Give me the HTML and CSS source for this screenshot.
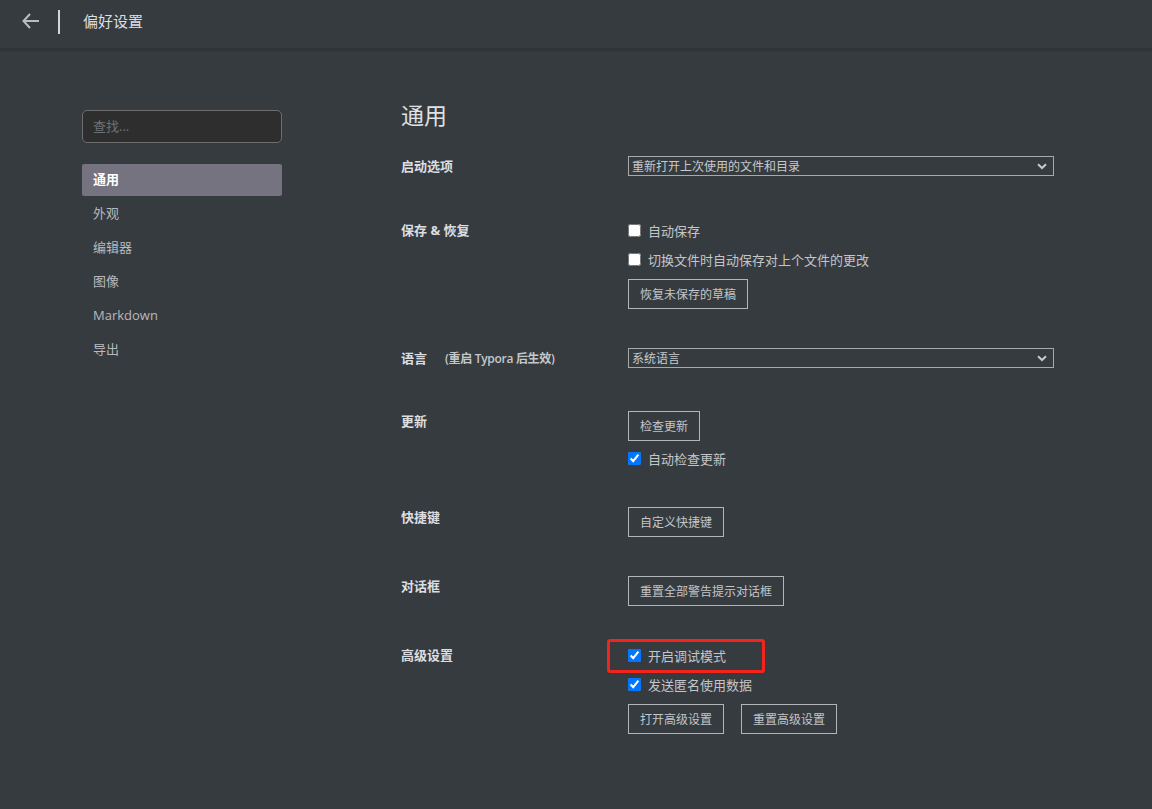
FILE: index.html
```html
<!DOCTYPE html>
<html lang="zh-CN">
<head>
<meta charset="utf-8">
<title>偏好设置</title>
<link rel="stylesheet" href="styles.css">
</head>
<body>
<header class="topbar">
  <span class="back">
    <svg width="18" height="16" viewBox="0 0 18 16"><path d="M8 1 L1.5 8 L8 15 M1.5 8 H17" fill="none" stroke="#b9bcc0" stroke-width="2"/></svg>
  </span>
  <span class="divider"></span>
  <span class="title">偏好设置</span>
</header>
<div class="main">
  <aside class="sidebar">
    <div class="search">查找...</div>
    <nav class="nav">
      <div class="nav-item active">通用</div>
      <div class="nav-item">外观</div>
      <div class="nav-item">编辑器</div>
      <div class="nav-item">图像</div>
      <div class="nav-item">Markdown</div>
      <div class="nav-item">导出</div>
    </nav>
  </aside>
  <section class="content">
    <h1 class="heading">通用</h1>

    <div class="row">
      <div class="label">启动选项</div>
      <div class="ctrl">
        <div class="select"><span>重新打开上次使用的文件和目录</span>
          <svg class="chev" width="10" height="7" viewBox="0 0 10 7"><path d="M1 1.2 L5 5 L9 1.2" fill="none" stroke="#c8cacd" stroke-width="2"/></svg>
        </div>
      </div>
    </div>

    <div class="row">
      <div class="label">保存 &amp; 恢复</div>
      <div class="ctrl">
        <label class="check"><input type="checkbox"><span>自动保存</span></label>
        <label class="check"><input type="checkbox"><span>切换文件时自动保存对上个文件的更改</span></label>
        <div class="btns"><button class="btn">恢复未保存的草稿</button></div>
      </div>
    </div>

    <div class="row">
      <div class="label">语言<span class="note">(重启 Typora 后生效)</span></div>
      <div class="ctrl">
        <div class="select"><span>系统语言</span>
          <svg class="chev" width="10" height="7" viewBox="0 0 10 7"><path d="M1 1.2 L5 5 L9 1.2" fill="none" stroke="#c8cacd" stroke-width="2"/></svg>
        </div>
      </div>
    </div>

    <div class="row">
      <div class="label">更新</div>
      <div class="ctrl">
        <div class="btns first"><button class="btn">检查更新</button></div>
        <label class="check"><input type="checkbox" checked><span>自动检查更新</span></label>
      </div>
    </div>

    <div class="row">
      <div class="label">快捷键</div>
      <div class="ctrl">
        <div class="btns first"><button class="btn">自定义快捷键</button></div>
      </div>
    </div>

    <div class="row">
      <div class="label">对话框</div>
      <div class="ctrl">
        <div class="btns first"><button class="btn">重置全部警告提示对话框</button></div>
      </div>
    </div>

    <div class="row">
      <div class="label">高级设置</div>
      <div class="ctrl">
        <div class="highlight-wrap">
          <label class="check"><input type="checkbox" checked><span>开启调试模式</span></label>
          <span class="redbox"></span>
        </div>
        <label class="check"><input type="checkbox" checked><span>发送匿名使用数据</span></label>
        <div class="btns"><button class="btn">打开高级设置</button><button class="btn">重置高级设置</button></div>
      </div>
    </div>
  </section>
</div>
</body>
</html>
```

FILE: styles.css
```css
* { box-sizing: border-box; }
html, body { margin: 0; padding: 0; }
body {
  width: 1152px;
  height: 809px;
  overflow: hidden;
  background: #363b40;
  color: #b8bfc6;
  font-family: "Open Sans", "Noto Sans CJK SC", sans-serif;
  font-size: 13px;
}
.topbar {
  height: 50px;
  display: flex;
  align-items: center;
  background: #363b40;
  border-bottom: 2px solid #303337;
  box-shadow: 0 1px 2px rgba(0,0,0,0.15);
}
.back {
  width: 58px;
  display: flex;
  padding-left: 22px;
  align-items: center;
  height: 24px;
  margin-top: -6px;
}
.divider {
  width: 2px;
  height: 24px;
  background: #d4d6d8;
  margin-top: -5px;
}
.title {
  margin-left: 23px;
  margin-top: -7px;
  font-size: 15px;
  color: #dcdee0;
}
.main {
  display: flex;
}
.sidebar {
  width: 200px;
  margin-left: 82px;
  padding-top: 60px;
}
.search {
  height: 33px;
  border: 1px solid #6e6e6e;
  border-radius: 5px;
  background: #2e2e2f;
  color: #707172;
  font-size: 13px;
  padding: 6px 10px;
  line-height: 19px;
}
.nav {
  margin-top: 21px;
  display: flex;
  flex-direction: column;
  gap: 2px;
}
.nav-item {
  height: 32px;
  line-height: 30px;
  padding-left: 11px;
  color: #b6b9bd;
  font-size: 13px;
}
.nav-item.active {
  background: #74737f;
  color: #ffffff;
  font-weight: 600;
  border-radius: 2px;
}
.content {
  margin-left: 119px;
  width: 653px;
  padding-top: 47px;
}
.heading {
  margin: 0 0 23px 0;
  font-size: 23px;
  font-weight: normal;
  color: #dfe1e3;
  line-height: 36px;
}
.row {
  display: grid;
  grid-template-columns: 227px 426px;
  margin-bottom: 39px;
}
div.row:first-of-type {
  margin-bottom: 40px;
}
.label {
  font-weight: 700;
  color: #dcdee0;
  font-size: 13px;
  line-height: 18px;
  padding-top: 1px;
}
.note {
  font-weight: 600;
  font-size: 12px;
  margin-left: 18px;
  letter-spacing: -0.3px;
  color: #c4c7ca;
}
.ctrl {
  display: flex;
  flex-direction: column;
  align-items: flex-start;
}
.select {
  width: 426px;
  height: 20px;
  border: 1px solid #a7a9ab;
  display: flex;
  align-items: center;
  justify-content: space-between;
  padding: 0 6px 0 3px;
  font-size: 12px;
  color: #c7cacd;
  margin-bottom: 4px;
}
.check {
  display: flex;
  align-items: center;
  height: 20px;
  margin-bottom: 9px;
  color: #c3c6c9;
  font-size: 13px;
}
.check:last-child { margin-bottom: 0; }
.check input {
  margin: 0 7px 0 0;
  width: 13px;
  height: 13px;
}
.btns {
  display: flex;
  gap: 17px;
  margin-top: 1px;
}
.btns.first { margin-top: 0; margin-bottom: 7px; }
.btns.first:last-child { margin-bottom: 0; }
.btn {
  height: 30px;
  padding: 0 11px;
  background: transparent;
  border: 1px solid #b3b6b9;
  color: #c3c6c9;
  font-family: "Open Sans", "Noto Sans CJK SC", sans-serif;
  font-size: 12px;
  border-radius: 0;
}
.highlight-wrap {
  position: relative;
}
.redbox {
  position: absolute;
  left: -21px;
  top: -6px;
  width: 158px;
  height: 34px;
  border: 3px solid #f4241d;
  border-radius: 3px;
  pointer-events: none;
}
```
